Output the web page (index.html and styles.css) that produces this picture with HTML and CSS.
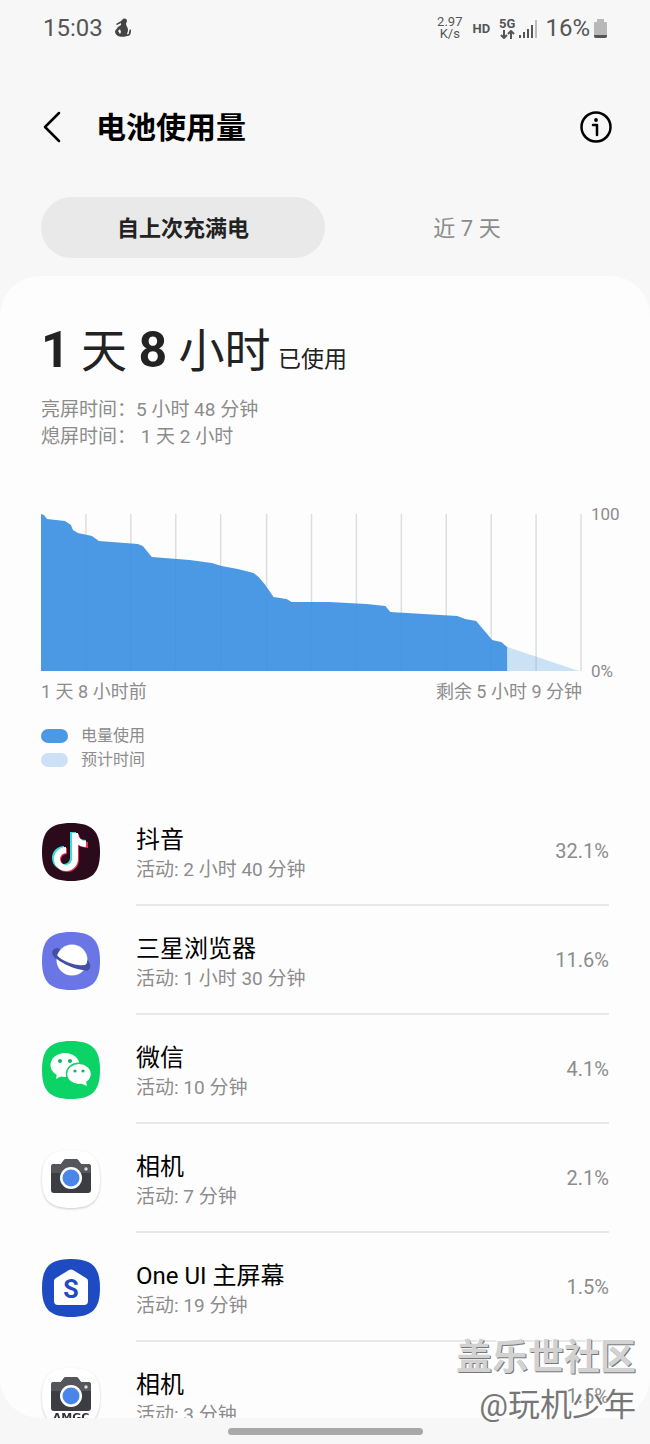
FILE: index.html
```html
<!DOCTYPE html>
<html lang="zh-CN">
<head>
    <meta charset="UTF-8">
    <meta name="viewport" content="width=device-width, initial-scale=1.0">
    <title>电池使用量</title>
    <link rel="stylesheet" href="styles.css">
</head>
<body>
    <div class="status-bar">
        <span class="clock">15:03</span>
        <svg class="notice-icon" width="18" height="20" viewBox="0 0 18 20">
            <path d="M8 1c2-1 4 0 4 2 0 1-1 2-1 3 0 2 2 3 2 6 0 2-1 3-1 4 1 1 2 0 2-2l1-3 1 1c0 4-1 6-4 6-1 1-8 1-9 0-2-1-3-3-3-5l3-4 3-2 0-2-4 2-1-1 5-3z"/>
            <path class="notice-gap" d="M3 13l2-2 1 3-1 2z"/>
        </svg>
        <span class="net-speed">2.97<br>K/s</span>
        <span class="hd">HD</span>
        <span class="network">
            <b>5G</b>
            <svg width="15" height="9" viewBox="0 0 15 9">
                <path d="M4 0v8M1 5l3 3 3-3M11 9V1M8 4l3-3 3 3"/>
            </svg>
        </span>
        <svg class="signal" width="18" height="18" viewBox="0 0 18 18">
            <path d="M0 15h2v3H0zM4 12h2v6H4zM8 9h2v9H8zM12 5h2v13h-2z"/>
            <path class="signal-off" d="M16 0h2v18h-2z"/>
        </svg>
        <span class="level">16%</span>
        <svg class="battery" width="13" height="19" viewBox="0 0 13 19">
            <path d="M3 0h7v3h2q1 0 1 1v13q0 2-2 2H2q-2 0-2-2V4q0-1 1-1h2z"/>
            <path class="battery-fill" d="M0 16h13v1q0 2-2 2H2q-2 0-2-2z"/>
        </svg>
    </div>

    <header class="header">
        <button class="icon-button" aria-label="返回">
            <svg width="18" height="32" viewBox="0 0 18 32">
                <path d="M16 2L2 16l14 14"/>
            </svg>
        </button>
        <h1 class="title">电池使用量</h1>
        <button class="icon-button" aria-label="信息">
            <svg width="32" height="32" viewBox="0 0 32 32">
                <circle cx="16" cy="16" r="14.5"/>
                <path d="M13 14h4v10"/>
                <circle class="dot" cx="16" cy="9" r="1.9"/>
            </svg>
        </button>
    </header>

    <div class="tabs" role="tablist">
        <button class="tab active" role="tab" aria-selected="true">自上次充满电</button>
        <button class="tab" role="tab" aria-selected="false">近 7 天</button>
    </div>

    <main class="card">
        <h2 class="total"><b>1</b> 天 <b>8</b> 小时 <small>已使用</small></h2>
        <div class="screen-time">
            <p>亮屏时间：5 小时 48 分钟</p>
            <p>熄屏时间： 1 天 2 小时</p>
        </div>

        <div class="chart">
            <svg class="plot" viewBox="0 0 542 157" preserveAspectRatio="none">
                <path class="grid" d="M45 0V157M90 0V157M135 0V157M180 0V157M226 0V157M271 0V157M316 0V157M361 0V157M406 0V157M451 0V157M496 0V157M541 0V157"/>
                <path class="estimate" d="M467 133L539 157H467z"/>
                <path class="usage" d="M0 0L3 1 6 5 24 7 30 11 32 16 37 19 51 22 58 27 97 30 102 32 111 43 149 46 171 49 181 52 197 55 213 59 218 63 224 70 233 83 246 85 251 88 289 88 326 90 345 92 350 98 417 102 425 105 436 107 452 126 461 128 467 133V157H0z"/>
            </svg>
            <div class="scale">
                <span>100</span>
                <span>0%</span>
            </div>
            <div class="range">
                <span>1 天 8 小时前</span>
                <span>剩余 5 小时 9 分钟</span>
            </div>
        </div>

        <ul class="legend">
            <li><i class="swatch"></i>电量使用</li>
            <li><i class="swatch light"></i>预计时间</li>
        </ul>

        <ul class="app-list">
            <li class="app">
                <svg class="app-icon" viewBox="0 0 58 58">
                    <path fill="#2b0a1c" d="M29 0C50 0 58 8 58 29S50 58 29 58 0 50 0 29 8 0 29 0z"/>
                    <g fill="none" stroke-width="6">
                        <path stroke="#35e0dc" d="M31 9v26a9 9 0 1 1-9-9M31 10c1 6 6 10 13 10"/>
                        <path stroke="#ee2a55" d="M34 11v26a9 9 0 1 1-9-9M34 12c1 6 5 10 12 10"/>
                        <path stroke="#fff" d="M33 10v26a9 9 0 1 1-9-9M33 11c1 6 5 10 11 10"/>
                    </g>
                </svg>
                <div class="app-info">
                    <div class="app-text">
                        <h3>抖音</h3>
                        <p>活动: 2 小时 40 分钟</p>
                    </div>
                    <span class="percent">32.1%</span>
                </div>
            </li>
            <li class="app">
                <svg class="app-icon" viewBox="0 0 58 58">
                    <path fill="#6b76e6" d="M29 0C50 0 58 8 58 29S50 58 29 58 0 50 0 29 8 0 29 0z"/>
                    <path fill="#4350a8" d="M15 16C9 17 8 22 15 28l30 11c5-3 3-9-1-13z"/>
                    <circle cx="30" cy="28" r="15.5" fill="#fff"/>
                    <path fill="#4350a8" d="M10 20c1 5 8 10 17 14s19 6 21 2c1-2 0-5-3-8 1 5-3 6-9 5-8-1-19-6-22-11-2 0-3-1-4-2z"/>
                </svg>
                <div class="app-info">
                    <div class="app-text">
                        <h3>三星浏览器</h3>
                        <p>活动: 1 小时 30 分钟</p>
                    </div>
                    <span class="percent">11.6%</span>
                </div>
            </li>
            <li class="app">
                <svg class="app-icon" viewBox="0 0 58 58">
                    <path fill="#0bd366" d="M29 0C50 0 58 8 58 29S50 58 29 58 0 50 0 29 8 0 29 0z"/>
                    <g fill="#fff">
                        <ellipse cx="23" cy="24" rx="14.5" ry="12"/>
                        <path d="M15 32l-1 6 7-4z"/>
                        <ellipse cx="37" cy="33" rx="12.5" ry="10.7" stroke="#0bd366" stroke-width="1.5"/>
                        <path d="M38 42l7 3-1-5z"/>
                    </g>
                    <g fill="#0bb85a">
                        <circle cx="18" cy="20" r="2"/>
                        <circle cx="28" cy="20" r="2"/>
                        <circle cx="33" cy="30" r="1.6"/>
                        <circle cx="41" cy="30" r="1.6"/>
                    </g>
                </svg>
                <div class="app-info">
                    <div class="app-text">
                        <h3>微信</h3>
                        <p>活动: 10 分钟</p>
                    </div>
                    <span class="percent">4.1%</span>
                </div>
            </li>
            <li class="app">
                <svg class="app-icon outlined" viewBox="0 0 58 58">
                    <path fill="#fff" d="M29 0C50 0 58 8 58 29S50 58 29 58 0 50 0 29 8 0 29 0z"/>
                    <path fill="#3c3d42" d="M12 14h7l3-4q1-1 2-1h10q1 0 2 1l3 4h7q3 0 3 3v23q0 3-3 3H12q-3 0-3-3V17q0-3 3-3z"/>
                    <path fill="#55565b" d="M12 14h7l3-4q1-1 2-1h10q1 0 2 1l3 4h7q3 0 3 3v6H9v-6q0-3 3-3z"/>
                    <circle cx="29" cy="28" r="11" fill="#fff"/>
                    <circle cx="29" cy="28" r="8.5" fill="#4a86e8"/>
                    <circle cx="44" cy="19" r="1.7" fill="#ddd"/>
                </svg>
                <div class="app-info">
                    <div class="app-text">
                        <h3>相机</h3>
                        <p>活动: 7 分钟</p>
                    </div>
                    <span class="percent">2.1%</span>
                </div>
            </li>
            <li class="app">
                <svg class="app-icon" viewBox="0 0 58 58">
                    <path fill="#1f4bc2" d="M29 0C50 0 58 8 58 29S50 58 29 58 0 50 0 29 8 0 29 0z"/>
                    <path fill="#fff" d="M27 11q2-1 4 0l13 8q2 1 2 3v20q0 4-4 4H16q-4 0-4-4V22q0-2 2-3z"/>
                    <text class="launcher-mark" x="29" y="39">S</text>
                </svg>
                <div class="app-info">
                    <div class="app-text">
                        <h3>One UI 主屏幕</h3>
                        <p>活动: 19 分钟</p>
                    </div>
                    <span class="percent">1.5%</span>
                </div>
            </li>
            <li class="app">
                <svg class="app-icon outlined" viewBox="0 0 58 58">
                    <path fill="#fff" d="M29 0C50 0 58 8 58 29S50 58 29 58 0 50 0 29 8 0 29 0z"/>
                    <path fill="#3c3d42" d="M12 14h7l3-4q1-1 2-1h10q1 0 2 1l3 4h7q3 0 3 3v23q0 3-3 3H12q-3 0-3-3V17q0-3 3-3z"/>
                    <path fill="#55565b" d="M12 14h7l3-4q1-1 2-1h10q1 0 2 1l3 4h7q3 0 3 3v6H9v-6q0-3 3-3z"/>
                    <circle cx="29" cy="28" r="11" fill="#fff"/>
                    <circle cx="29" cy="28" r="8.5" fill="#4a86e8"/>
                    <circle cx="44" cy="19" r="1.7" fill="#ddd"/>
                    <text class="camera-mark" x="29" y="53">AMGC</text>
                </svg>
                <div class="app-info">
                    <div class="app-text">
                        <h3>相机</h3>
                        <p>活动: 3 分钟</p>
                    </div>
                    <span class="percent">1.5%</span>
                </div>
            </li>
        </ul>
    </main>

    <div class="nav-bar"><span class="nav-handle"></span></div>

    <div class="watermark">
        <strong>盖乐世社区</strong>
        <span>@玩机少年</span>
    </div>
</body>
</html>
```

FILE: styles.css
```css
* {
    box-sizing: border-box;
    margin: 0;
    padding: 0;
}

body {
    position: relative;
    display: flex;
    flex-direction: column;
    height: 100vh;
    overflow: hidden;
    font-family: Roboto, "Noto Sans CJK SC", sans-serif;
    background-color: #f7f7f7;
    color: #222;
}

button {
    border: none;
    background: none;
    font-family: inherit;
    cursor: pointer;
}

ul {
    list-style: none;
}

/* Status bar */
.status-bar {
    flex: none;
    display: flex;
    align-items: center;
    height: 56px;
    padding: 0 43px;
    color: #555;
}

.clock,
.level {
    font-size: 24px;
}

.notice-icon {
    margin-left: 12px;
    fill: #444;
}

.notice-gap {
    fill: #f7f7f7;
}

.net-speed {
    margin-left: auto;
    font-size: 13px;
    line-height: 12px;
    text-align: center;
}

.hd {
    margin-left: 10px;
    font-size: 13px;
    font-weight: bold;
}

.network {
    display: flex;
    flex-direction: column;
    align-items: center;
    margin-left: 9px;
    font-size: 13px;
    line-height: 12px;
}

.network svg {
    fill: none;
    stroke: #555;
    stroke-width: 2;
}

.signal {
    margin: 2px 8px 0 4px;
    fill: #555;
}

.signal-off {
    fill: #bbb;
}

.battery {
    margin-left: 4px;
    fill: #b8b8b8;
}

.battery-fill {
    fill: #555;
}

/* Header */
.header {
    flex: none;
    display: flex;
    align-items: center;
    height: 141px;
    padding: 0 38px 0 43px;
}

.icon-button {
    display: flex;
}

.icon-button svg {
    fill: none;
    stroke: #000;
    stroke-width: 2.5;
    stroke-linecap: round;
    stroke-linejoin: round;
}

.icon-button .dot {
    fill: #000;
    stroke: none;
}

.title {
    flex: 1;
    margin-left: 35px;
    padding-top: 2px;
    font-size: 30px;
    line-height: 40px;
    color: #000;
}

/* Tabs */
.tabs {
    flex: none;
    display: flex;
    margin: 0 41px 18px;
}

.tab {
    flex: 1;
    height: 61px;
    padding-bottom: 3px;
    border-radius: 31px;
    font-size: 22px;
    color: #8c8c8c;
}

.tab.active {
    background-color: #e9e9e9;
    font-weight: bold;
    color: #222;
}

/* Card */
.card {
    flex: 1;
    min-height: 0;
    padding: 44px 41px 0;
    overflow: hidden;
    border-radius: 40px;
    background-color: #fdfdfd;
}

.total {
    font-size: 46px;
    font-weight: normal;
    line-height: 60px;
}

.total b {
    font-size: 50px;
}

.total small {
    margin-left: -4px;
    font-size: 23px;
}

.screen-time {
    margin-top: 6px;
    font-size: 19px;
    line-height: 27px;
    color: #8c8c8c;
}

/* Chart */
.chart {
    display: grid;
    grid-template-columns: 1fr 27px;
    margin-top: 64px;
    font-size: 17px;
    color: #8c8c8c;
}

.plot {
    width: 100%;
    height: 157px;
}

.usage {
    fill: #378ee2;
    fill-opacity: 0.9;
}

.estimate {
    fill: #4b99e5;
    fill-opacity: 0.28;
}

.grid {
    fill: none;
    stroke: #dedede;
    stroke-width: 1.5;
}

.scale {
    display: flex;
    flex-direction: column;
    justify-content: space-between;
    margin: -10px 0;
    padding-left: 9px;
    line-height: 20px;
}

.range {
    display: flex;
    justify-content: space-between;
    margin-top: 9px;
    font-size: 18px;
    line-height: 24px;
}

.legend {
    margin-top: 20px;
    font-size: 16px;
    line-height: 24px;
    color: #8c8c8c;
}

.legend li {
    display: flex;
    align-items: center;
}

.swatch {
    width: 27px;
    height: 14px;
    margin-right: 13px;
    border-radius: 7px;
    background-color: #4b99e5;
}

.swatch.light {
    background-color: #cce1f6;
}

/* App list */
.app-list {
    margin-top: 25px;
}

.app {
    display: flex;
    align-items: center;
    height: 109px;
}

.app-icon {
    flex: none;
    width: 58px;
    height: 58px;
    margin: 0 36px 0 1px;
}

.app-icon.outlined {
    filter: drop-shadow(0 1px 1px rgba(0, 0, 0, 0.2));
}

.launcher-mark {
    font-size: 25px;
    font-weight: bold;
    text-anchor: middle;
    fill: #1f4bc2;
}

.camera-mark {
    font-family: "DejaVu Sans", sans-serif;
    font-size: 11px;
    font-weight: bold;
    text-anchor: middle;
    fill: #333;
}

.app-info {
    flex: 1;
    display: flex;
    align-items: center;
    justify-content: space-between;
    height: 100%;
    border-bottom: 2px solid #e8e8e8;
}

.app-text {
    padding-top: 8px;
}

.app-text h3 {
    font-size: 24px;
    font-weight: normal;
    line-height: 31px;
    color: #000;
}

.app-text p {
    font-size: 19px;
    line-height: 28px;
    color: #8c8c8c;
}

.percent {
    font-size: 20px;
    color: #8c8c8c;
}

/* Bottom bar */
.nav-bar {
    flex: none;
    display: flex;
    align-items: center;
    justify-content: center;
    height: 26px;
}

.nav-handle {
    width: 30%;
    height: 7px;
    border-radius: 4px;
    background-color: #a9a9a9;
}

.watermark {
    position: absolute;
    right: 14px;
    bottom: 16px;
    display: flex;
    flex-direction: column;
    align-items: flex-end;
    pointer-events: none;
}

.watermark strong {
    font-size: 36px;
    line-height: 48px;
    color: #d2d2d2;
    text-shadow: 1px 1px 0 #777, -1px -1px 0 #fff;
}

.watermark span {
    font-size: 32px;
    line-height: 46px;
    color: #777;
    text-shadow: -1px -1px 0 #fff;
}
```
